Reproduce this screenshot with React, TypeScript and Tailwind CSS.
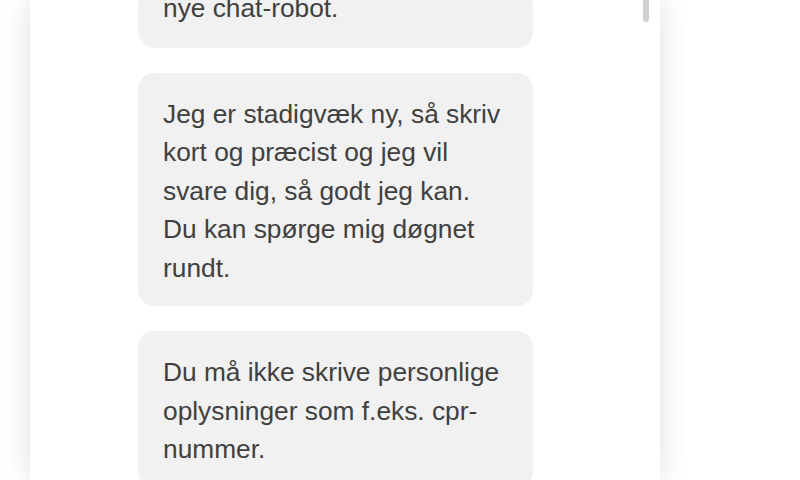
import React from "react";

const messages = [
  "Jeg er stadigvæk ny, så skriv kort og præcist og jeg vil svare dig, så godt jeg kan. Du kan spørge mig døgnet rundt.",
  "Du må ikke skrive personlige oplysninger som f.eks. cpr-nummer.",
];

export default function App() {
  return (
    <div className="w-[800px] h-[480px] overflow-hidden bg-white" style={{ fontFamily: '"Liberation Sans", Arial, sans-serif' }}>
      <div className="ml-[30px] w-[630px] h-[480px] bg-white shadow-[0_0_28px_rgba(0,0,0,0.13)] relative overflow-hidden">
        <div className="flex flex-col gap-[25px] pl-[108px] pr-[127px] mt-[-11px]">
          <div className="rounded-[16px] bg-[#f1f1f1] pl-[25px] pr-[30px] pt-[0px] pb-[20px] text-[26.3px] leading-[38.5px] text-[#404040]">
            nye chat-robot.
          </div>
          {messages.map((m, i) => (
            <div key={i} className="rounded-[16px] bg-[#f1f1f1] pl-[25px] pr-[30px] pt-[22px] pb-[19px] text-[26.3px] leading-[38.5px] text-[#404040]">
              {m}
            </div>
          ))}
        </div>
        <div className="absolute left-[613px] top-0 w-[6px] h-[22px] rounded-b-full bg-[#cfcfcf]" />
      </div>
    </div>
  );
}
